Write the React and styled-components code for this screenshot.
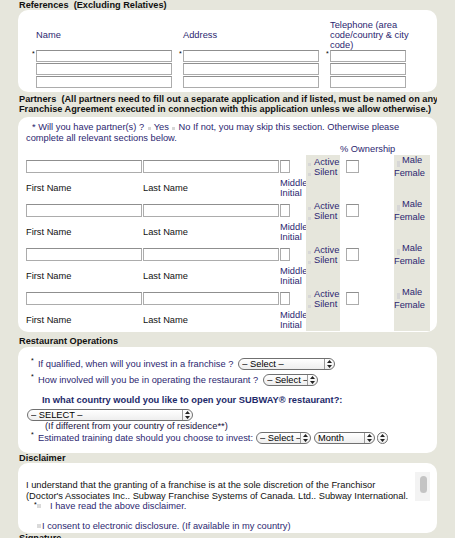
import React from 'react';
import styled, { createGlobalStyle } from 'styled-components';

const NAVY = '#2c1f70';
const BEIGE = '#e6e6dc';

const GlobalStyle = createGlobalStyle`
  html, body { margin: 0; padding: 0; background: ${BEIGE}; }
  body {
    font-family: "Liberation Sans", Arial, Helvetica, sans-serif;
    font-size: 9.3px;
    color: #111;
  }
`;

const Page = styled.div`
  width: 419px;
  padding-left: 18px;
  height: 538px;
  overflow: hidden;
`;

const SectionTitle = styled.div`
  font-weight: bold;
  font-size: 9.2px;
  line-height: 10px;
  color: #111;
  white-space: nowrap;
  padding: ${(p) => p.$pt || 0}px 1px ${(p) => p.$pb || 0}px;
`;

const Panel = styled.div`
  background: #fff;
  border-radius: 10px;
  box-sizing: border-box;
`;

/* ---------- References ---------- */
const RefPanel = styled(Panel)`
  height: 82px;
  padding: 9px 0 3px 18px;
  display: grid;
  grid-template-columns: 136px 136px 76px;
  column-gap: 11px;
`;

const RefCol = styled.div`
  display: flex;
  flex-direction: column;
`;

const ColLabel = styled.div`
  height: 31px;
  display: flex;
  align-items: center;
  color: ${NAVY};
  line-height: 10px;
  white-space: nowrap;
`;

const InputStack = styled.div`
  position: relative;
  display: flex;
  flex-direction: column;
  gap: 1px;
  &::before {
    content: '*';
    position: absolute;
    left: -4px;
    top: 0;
    font-size: 7px;
    line-height: 7px;
    color: #000;
  }
`;

const TextInput = styled.div`
  box-sizing: border-box;
  width: ${(p) => p.$w}px;
  height: ${(p) => p.$h || 12}px;
  border: 1px solid #acacac;
  border-top-color: #8f8f8f;
  background: #fff;
  flex-shrink: 0;
`;

/* ---------- Partners ---------- */
const PartnerPanel = styled(Panel)`
  height: 215px;
  padding: 5px 0 1px 8px;
`;

const Intro = styled.div`
  color: ${NAVY};
  line-height: 11px;
  text-indent: 6px;
  white-space: nowrap;
`;

const Dot = styled.span`
  display: inline-block;
  width: 3px;
  height: 3px;
  background: #d6d6d6;
  margin: 0 ${(p) => p.$mr ?? 3}px 0 ${(p) => p.$ml ?? 0}px;
  vertical-align: baseline;
`;

const PartnerGrid = styled.div`
  display: grid;
  grid-template-columns: 117px 137px 26px 34px 54px 36px;
`;

const HeadRow = styled(PartnerGrid)`
  height: 11px;
  line-height: 11px;
  color: ${NAVY};
`;

const OwnershipHead = styled.div`
  grid-column: 5;
  text-align: center;
  white-space: nowrap;
`;

const PartnerRow = styled(PartnerGrid)`
  height: 44px;
`;

const NameCell = styled.div`
  padding-top: 5px;
  display: flex;
  flex-direction: column;
`;

const CellLabel = styled.div`
  margin-top: 4px;
  height: 22px;
  display: flex;
  align-items: center;
  line-height: 10px;
  white-space: nowrap;
  color: ${(p) => (p.$navy ? NAVY : '#111')};
`;

const GrayCell = styled.div`
  background: ${BEIGE};
  color: ${NAVY};
  line-height: 10px;
  padding-top: ${(p) => p.$pt || 0}px;
  padding-left: ${(p) => p.$pl || 0}px;
  white-space: nowrap;
`;

const OptLine = styled.div`
  height: ${(p) => p.$h || 10}px;
  display: flex;
  align-items: flex-end;
  padding-left: ${(p) => p.$pl || 0}px;
  line-height: 10px;
`;

const OptDot = styled.span`
  width: 3px;
  height: 3px;
  background: #d6d6d6;
  margin-right: ${(p) => p.$mr ?? 3}px;
  margin-bottom: 1px;
  flex-shrink: 0;
`;

const OwnCell = styled.div`
  padding: 5px 0 0 6px;
`;

/* ---------- Restaurant ops ---------- */
const OpsPanel = styled(Panel)`
  height: 106px;
  padding: 10px 0 9px 8px;
  display: flex;
  flex-direction: column;
`;

const QRow = styled.div`
  display: flex;
  align-items: center;
  height: ${(p) => p.$h || 14}px;
  margin-top: ${(p) => p.$mt || 0}px;
  color: ${NAVY};
  white-space: nowrap;
`;

const Star = styled.span`
  align-self: flex-start;
  font-size: 7px;
  line-height: 7px;
  margin-left: 5px;
  width: 7px;
  color: #000;
`;

const Question = styled.div`
  margin-top: 8px;
  padding-left: 16px;
  font-weight: bold;
  color: #1d2a6a;
  line-height: 11px;
  white-space: nowrap;
`;

const Note = styled.div`
  padding-left: 19px;
  line-height: 10px;
  color: #1a1440;
  white-space: nowrap;
`;

const SelectBox = styled.div`
  display: inline-flex;
  align-items: center;
  box-sizing: border-box;
  width: ${(p) => p.$w}px;
  height: ${(p) => p.$h || 12}px;
  margin-left: ${(p) => p.$ml || 0}px;
  margin-top: ${(p) => p.$mt || 0}px;
  border: 1px solid #707070;
  border-radius: 6px;
  background: linear-gradient(#ffffff, #eeeeee);
  color: #000;
  font-size: 9.3px;
  line-height: 10px;
  padding-left: 3px;
  overflow: hidden;
  flex-shrink: 0;
`;

const SelectText = styled.span`
  flex: 1;
  white-space: nowrap;
  overflow: hidden;
`;

const ArrowPart = styled.span`
  width: 9px;
  height: 100%;
  display: flex;
  align-items: center;
  justify-content: center;
  border-left: 1px solid #9a9a9a;
  flex-shrink: 0;
`;

const Arrows = () => (
  <svg width="5" height="8" viewBox="0 0 5 8">
    <path d="M2.5 0 L5 3 L0 3 Z M2.5 8 L5 5 L0 5 Z" fill="#222" />
  </svg>
);

const Select = ({ w, ml, mt, children }) => (
  <SelectBox $w={w} $ml={ml} $mt={mt}>
    {children ? <SelectText>{children}</SelectText> : null}
    <ArrowPart>
      <Arrows />
    </ArrowPart>
  </SelectBox>
);

const EmptySelect = styled(SelectBox)`
  padding-left: 0;
  justify-content: center;
  & > span { border-left: none; }
`;

/* ---------- Disclaimer ---------- */
const DisclaimerPanel = styled(Panel)`
  height: 70px;
  padding: 9px 0 0 8px;
`;

const ScrollBox = styled.div`
  display: flex;
  width: 404px;
  height: 29px;
`;

const ScrollText = styled.div`
  flex: 1;
  overflow: hidden;
  padding-top: 8px;
  box-sizing: border-box;
  line-height: 11px;
  color: #111;
  white-space: nowrap;
`;

const Track = styled.div`
  width: 15px;
  background: #f3f3f3;
  box-sizing: border-box;
  padding: 4px 0 0 5px;
`;

const Thumb = styled.div`
  width: 7px;
  height: 17px;
  border-radius: 4px;
  background: #c4c4c4;
`;

const CheckRow = styled.div`
  display: flex;
  align-items: center;
  height: 10px;
  margin-top: ${(p) => p.$mt || 0}px;
  padding-left: ${(p) => p.$pl || 0}px;
  color: ${NAVY};
  line-height: 10px;
  white-space: nowrap;
`;

const CheckStar = styled.span`
  width: 3px;
  font-size: 7px;
  line-height: 7px;
  align-self: flex-start;
  color: #000;
`;

const CheckBox = styled.span`
  width: 4px;
  height: 4px;
  background: #dadada;
  margin-right: ${(p) => p.$mr}px;
  flex-shrink: 0;
`;

const partners = [0, 1, 2, 3];

export default function App() {
  return (
    <>
      <GlobalStyle />
      <Page>
        <SectionTitle>References&nbsp; (Excluding Relatives)</SectionTitle>
        <RefPanel>
          <RefCol>
            <ColLabel>Name</ColLabel>
            <InputStack>
              <TextInput $w={136} />
              <TextInput $w={136} />
              <TextInput $w={136} />
            </InputStack>
          </RefCol>
          <RefCol>
            <ColLabel>Address</ColLabel>
            <InputStack>
              <TextInput $w={136} />
              <TextInput $w={136} />
              <TextInput $w={136} />
            </InputStack>
          </RefCol>
          <RefCol>
            <ColLabel>
              Telephone (area
              <br />
              code/country &amp; city
              <br />
              code)
            </ColLabel>
            <InputStack>
              <TextInput $w={76} />
              <TextInput $w={76} />
              <TextInput $w={76} />
            </InputStack>
          </RefCol>
        </RefPanel>

        <SectionTitle $pt={2} $pb={3}>
          Partners&nbsp; (All partners need to fill out a separate application and if listed, must be named on any
          <br />
          Franchise Agreement executed in connection with this application unless we allow otherwise.)
        </SectionTitle>
        <PartnerPanel>
          <Intro>
            * Will you have partner(s) ? <Dot $ml={1} />Yes <Dot $ml={1} />No If not, you may skip this section. Otherwise please
            <br />
            complete all relevant sections below.
          </Intro>
          <HeadRow>
            <OwnershipHead>% Ownership</OwnershipHead>
          </HeadRow>
          {partners.map((i) => (
            <PartnerRow key={i}>
              <NameCell>
                <TextInput $w={116} $h={13} />
                <CellLabel>First Name</CellLabel>
              </NameCell>
              <NameCell>
                <TextInput $w={136} $h={13} />
                <CellLabel>Last Name</CellLabel>
              </NameCell>
              <NameCell>
                <TextInput $w={10} $h={13} />
                <CellLabel $navy>
                  Middle
                  <br />
                  Initial
                </CellLabel>
              </NameCell>
              <GrayCell $pt={2} $pl={2}>
                <OptLine>
                  <OptDot />
                  Active
                </OptLine>
                <OptLine>
                  <OptDot />
                  Silent
                </OptLine>
              </GrayCell>
              <OwnCell>
                <TextInput $w={13} $h={13} />
              </OwnCell>
              <GrayCell>
                <OptLine $pl={3}>
                  <OptDot $mr={2} />
                  Male
                </OptLine>
                <OptLine $pl={3} $h={3}>
                  <OptDot $mr={0} />
                </OptLine>
                <OptLine>Female</OptLine>
              </GrayCell>
            </PartnerRow>
          ))}
        </PartnerPanel>

        <SectionTitle $pt={4} $pb={1}>Restaurant Operations</SectionTitle>
        <OpsPanel>
          <QRow>
            <Star>*</Star>
            If qualified, when will you invest in a franchise ?
            <Select w={97} ml={5}>– Select –</Select>
          </QRow>
          <QRow $mt={2}>
            <Star>*</Star>
            How involved will you be in operating the restaurant ?
            <Select w={55} ml={5}>– Select –</Select>
          </QRow>
          <Question>In what country would you like to open your SUBWAY® restaurant?:</Question>
          <QRow $h={13} $mt={2}>
            <Select w={166} ml={1}>– SELECT –</Select>
          </QRow>
          <Note>(If different from your country of residence**)</Note>
          <QRow $h={13}>
            <Star>*</Star>
            Estimated training date should you choose to invest:
            <Select w={55} ml={3}>– Select –</Select>
            <Select w={61} ml={3}>Month</Select>
            <EmptySelect $w={11} $ml={2}>
              <ArrowPart>
                <Arrows />
              </ArrowPart>
            </EmptySelect>
          </QRow>
        </OpsPanel>

        <SectionTitle>Disclaimer</SectionTitle>
        <DisclaimerPanel>
          <ScrollBox>
            <ScrollText>
              I understand that the granting of a franchise is at the sole discretion of the Franchisor
              <br />
              (Doctor's Associates Inc.. Subway Franchise Systems of Canada. Ltd.. Subway International.
            </ScrollText>
            <Track>
              <Thumb />
            </Track>
          </ScrollBox>
          <CheckRow $pl={8}>
            <CheckStar>*</CheckStar>
            <CheckBox $mr={9} />I have read the above disclaimer.
          </CheckRow>
          <CheckRow $pl={11} $mt={10}>
            <CheckBox $mr={1} />I consent to electronic disclosure. (If available in my country)
          </CheckRow>
        </DisclaimerPanel>
        <SectionTitle>Signature</SectionTitle>
      </Page>
    </>
  );
}
